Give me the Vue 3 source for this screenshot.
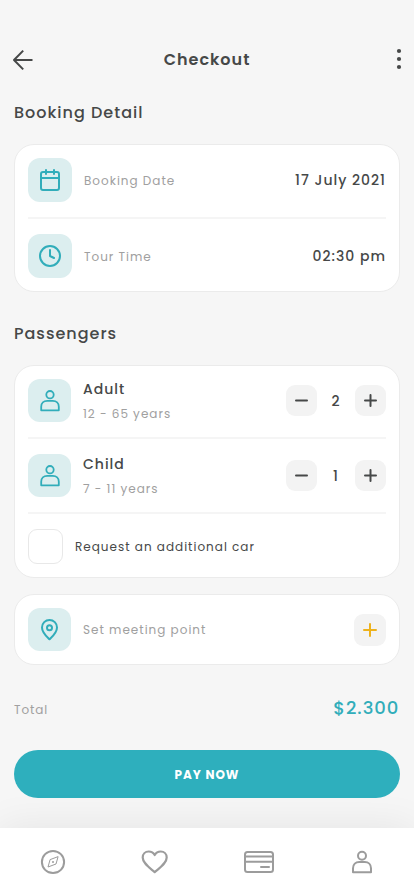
<script setup>
import { ref } from 'vue'

const details = [
  { label: 'Booking Date', value: '17 July 2021', icon: 'calendar' },
  { label: 'Tour Time', value: '02:30 pm', icon: 'clock' },
]
const passengers = ref([
  { name: 'Adult', ages: '12 - 65 years', count: 2 },
  { name: 'Child', ages: '7 - 11 years', count: 1 },
])
const extraCar = ref(false)
</script>

<template>
  <div class="screen">
    <header class="header">
      <svg class="back" width="22" height="22" viewBox="0 0 22 22"><path d="M20.500 11H2M11.200 1.600 2 11l9.200 9.400" /></svg>
      <h1>Checkout</h1>
      <svg class="more" width="6" height="22" viewBox="0 0 6 22">
        <circle cx="3" cy="3" r="2.100" /><circle cx="3" cy="11" r="2.100" /><circle cx="3" cy="19" r="2.100" />
      </svg>
    </header>

    <main>
      <h2>Booking Detail</h2>
      <section class="card booking">
        <div v-for="d in details" :key="d.label" class="row">
          <span class="tile">
            <svg v-if="d.icon === 'calendar'" width="24" height="24" viewBox="0 0 24 24"><rect x="3" y="4" width="18" height="18" rx="2" /><path d="M3 10h18M8 2v4M16 2v4" /></svg>
            <svg v-else width="24" height="24" viewBox="0 0 24 24"><circle cx="12" cy="12" r="10" /><path d="M12 6v6l4 2" /></svg>
          </span>
          <span class="label">{{ d.label }}</span>
          <span class="value">{{ d.value }}</span>
        </div>
      </section>

      <h2 class="second">Passengers</h2>
      <section class="card people">
        <div v-for="p in passengers" :key="p.name" class="row">
          <span class="tile">
            <svg class="person" width="22" height="24" viewBox="0 0 22 24"><circle cx="11" cy="5.700" r="3.700" /><path d="M2.200 21.300v-3.600c0-3.700 2.500-5.900 6-5.900h5.600c3.500 0 6 2.200 6 5.900v3.600z" /></svg>
          </span>
          <div class="who">
            <strong>{{ p.name }}</strong>
            <small>{{ p.ages }}</small>
          </div>
          <div class="stepper">
            <button type="button" @click="p.count--"><svg width="15" height="15" viewBox="0 0 15 15"><path d="M2 7.500h11" /></svg></button>
            <span>{{ p.count }}</span>
            <button type="button" @click="p.count++"><svg width="15" height="15" viewBox="0 0 15 15"><path d="M2 7.500h11M7.500 2v11" /></svg></button>
          </div>
        </div>
        <label class="row extra">
          <input v-model="extraCar" type="checkbox" />
          <span>Request an additional car</span>
        </label>
      </section>

      <section class="card meeting">
        <span class="tile">
          <svg width="21" height="24" viewBox="0 0 20 24"><path d="M10 21.300C7.800 19 2.500 14.700 2.500 9.400a7.500 7.500 0 0 1 15 0c0 5.300-5.300 9.600-7.500 11.900z" /><circle cx="10" cy="9.700" r="2.500" /></svg>
        </span>
        <span class="label">Set meeting point</span>
        <button type="button" class="add"><svg width="16" height="16" viewBox="0 0 16 16"><path d="M2 8h12M8 2v12" /></svg></button>
      </section>

      <div class="total"><span>Total</span><b>$2.300</b></div>
      <button type="button" class="pay">PAY NOW</button>
    </main>

    <nav class="tabs">
      <svg width="26" height="26" viewBox="0 0 26 26"><circle cx="13" cy="13" r="11.100" /><path class="thin" d="M18 8l-2 7-8 3 2-7z" /><circle class="dot" cx="13" cy="13" r="1" /></svg>
      <svg width="28" height="26" viewBox="0 0 28 26"><path class="heart" d="M13.700 23.200C7.700 18 1.700 14 1.700 8.500c0-3.500 2.500-6 6-6 2.600 0 4.800 1.300 6 3.500 1.200-2.200 3.400-3.500 6-3.500 3.500 0 6 2.500 6 6 0 5.500-6 9.500-12 14.700z" /></svg>
      <svg class="wallet" width="32" height="26" viewBox="0 0 32 26"><rect x="2" y="3" width="28" height="20" rx="2.500" /><path d="M2 7.500h28M2 12.700h28M18 18h8" /></svg>
      <svg width="22" height="26" viewBox="0 0 22 26"><circle cx="11" cy="6.700" r="4" /><path d="M2 23.300V19.200C2 15.300 4.600 13 8.200 13h5.600c3.600 0 6.200 2.300 6.200 6.200v4.100z" /></svg>
    </nav>
  </div>
</template>

<style>
body { margin: 0; background: #f6f6f6; }
</style>

<style scoped>
* { box-sizing: border-box; }
.screen {
  width: 414px;
  height: 896px;
  overflow: hidden;
  display: flex;
  flex-direction: column;
  background: #f6f6f6;
  color: #464848;
  font-family: Poppins, Inter, sans-serif;
}
svg { display: block; fill: none; stroke: currentColor; stroke-width: 2; stroke-linecap: round; stroke-linejoin: round; }
h1, h2 { margin: 0; }
button { display: grid; place-items: center; border: 0; padding: 0; font-family: inherit; color: inherit; }
.header {
  height: 94px;
  padding: 37px 12px 13px;
  display: grid;
  grid-template-columns: 1fr auto 1fr;
  align-items: center;
}
.back { margin-top: 1px; stroke-linecap: butt; }
.more { justify-self: end; fill: currentColor; stroke: none; margin-top: -1px; }
h1 { padding-top: 2px; font-size: 16px; line-height: 24px; font-weight: 600; letter-spacing: 1px; }
main { padding: 0 14px; flex: 1; }
h2 { height: 50px; padding-top: 7px; font-size: 16px; line-height: 24px; font-weight: 500; letter-spacing: 1px; }
h2.second { height: 73px; padding-top: 30px; }
.card { background: #fff; border: 1px solid #ebebeb; border-radius: 20px; padding: 13px; }
.booking { height: 148px; }
.people { height: 213px; }
.row { display: flex; align-items: center; }
.row + .row { margin-top: 15px; padding-top: 15px; border-top: 2px solid #f5f5f5; }
.tile { width: 43px; height: 43px; border-radius: 12px; background: #dceeef; color: #31adba; display: grid; place-items: center; flex: none; }
.booking .tile { width: 44px; height: 44px; }
.booking .label { padding-top: 2px; }
.person { stroke-width: 1.800; }
.label { margin-left: 12px; font-size: 12px; color: #a0a0a0; letter-spacing: 1px; }
.value { margin-left: auto; font-size: 14px; font-weight: 500; letter-spacing: 1px; }
.who { margin-left: 12px; height: 43px; display: flex; flex-direction: column; justify-content: space-between; }
.who strong { font-size: 14px; line-height: 20px; font-weight: 500; letter-spacing: 1px; }
.who small { font-size: 12px; line-height: 17px; color: #a0a0a0; letter-spacing: 1px; }
.stepper { margin-left: auto; display: flex; align-items: center; }
.stepper span { width: 38px; padding-top: 1px; text-align: center; font-size: 14px; font-weight: 500; letter-spacing: 1px; }
.stepper button { width: 31px; height: 31px; border-radius: 9px; background: #f3f3f3; }
.extra input { appearance: none; width: 35px; height: 35px; margin: 0; border: 1px solid #e8e8e8; border-radius: 9px; background: #fff; }
.extra span { margin-left: 12px; font-size: 12px; letter-spacing: 1px; }
.meeting { height: 71px; margin-top: 16px; display: flex; align-items: center; }
.add { margin-left: auto; width: 32px; height: 32px; border-radius: 9px; background: #f3f3f3; color: #edb21d; }
.total { height: 85px; display: flex; justify-content: space-between; align-items: center; }
.total span { font-size: 12px; color: #a0a0a0; letter-spacing: .9px; padding-top: 4px; }
.total b { padding-right: .6px; font-size: 18px; font-weight: 500; color: #31adba; letter-spacing: 1px; }
.pay { width: 100%; height: 48px; padding-top: 2px; border-radius: 24px; background: #2eafbd; color: #fff; font-size: 12px; font-weight: 700; letter-spacing: 1px; }
.tabs {
  height: 68px;
  flex: none;
  padding: 0 41px 0 40px;
  display: flex;
  align-items: center;
  justify-content: space-between;
  background: #fff;
  color: #9c9c9c;
  box-shadow: 0 0 40px rgba(0, 0, 0, .08);
}
.tabs .wallet { margin: 0 1px 0 -1px; }
.tabs .thin { stroke-width: 1; }
.tabs .dot { fill: currentColor; stroke: none; }
.tabs .heart { stroke-width: 2.200; }
</style>
